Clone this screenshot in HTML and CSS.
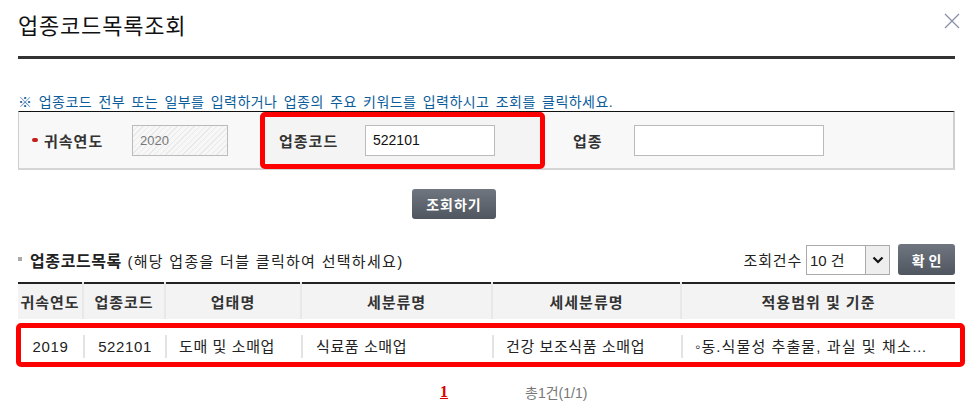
FILE: index.html
```html
<!DOCTYPE html>
<html lang="ko">

<head>
    <meta charset="UTF-8">
    <title>업종코드목록조회</title>
    <link rel="stylesheet" href="styles.css">
</head>

<body>
    <div class="popup">
        <div class="head">
            <h1 class="title">업종코드목록조회</h1>
            <a class="close" href="#" title="닫기">
                <svg width="16" height="16" viewBox="0 0 16 16"><path d="M1 1 L15 15 M15 1 L1 15" stroke="#8890a8" stroke-width="1.3" fill="none"/></svg>
            </a>
        </div>

        <p class="guide">※ 업종코드 전부 또는 일부를 입력하거나 업종의 주요 키워드를 입력하시고 조회를 클릭하세요.</p>

        <div class="search">
            <span class="req"></span>
            <label class="lbl lbl-year">귀속연도</label>
            <input type="text" class="inp inp-year" value="2020" disabled>
            <div class="code-cell">
                <label class="lbl lbl-code">업종코드</label>
                <input type="text" class="inp inp-code" value="522101">
                <span class="mark mark-code"></span>
            </div>
            <label class="lbl lbl-name">업종</label>
            <input type="text" class="inp inp-name">
        </div>

        <div class="btn-row">
            <button class="btn btn-search">조회하기</button>
        </div>

        <div class="list-head">
            <h2 class="list-title"><b>업종코드목록</b> (해당 업종을 더블 클릭하여 선택하세요)</h2>
            <div class="count">
                <span>조회건수</span>
                <div class="sel">
                    <span class="sel-val">10 건</span>
                    <span class="sel-arr">
                        <svg width="12" height="8" viewBox="0 0 12 8"><path d="M1.5 1.5 L6 6 L10.5 1.5" stroke="#111" stroke-width="2.2" fill="none"/></svg>
                    </span>
                </div>
                <button class="btn btn-ok">확 인</button>
            </div>
        </div>

        <div class="table-wrap">
            <table class="list">
                <colgroup>
                    <col style="width:65px">
                    <col style="width:82px">
                    <col style="width:136px">
                    <col style="width:191px">
                    <col style="width:189px">
                    <col>
                </colgroup>
                <thead>
                    <tr>
                        <th>귀속연도</th>
                        <th>업종코드</th>
                        <th>업태명</th>
                        <th>세분류명</th>
                        <th>세세분류명</th>
                        <th>적용범위 및 기준</th>
                    </tr>
                </thead>
                <tbody>
                    <tr>
                        <td class="c"><div>2019</div></td>
                        <td class="c"><div>522101</div></td>
                        <td><div>도매 및 소매업</div></td>
                        <td><div>식료품 소매업</div></td>
                        <td><div>건강 보조식품 소매업</div></td>
                        <td><div>◦동.식물성 추출물, 과실 및 채소…</div></td>
                    </tr>
                </tbody>
            </table>
            <span class="mark mark-row"></span>
        </div>

        <div class="paging">
            <a href="#" class="page">1</a>
            <span class="total">총1건(1/1)</span>
        </div>
    </div>
</body>

</html>
```

FILE: styles.css
```css
body {
    margin: 0;
    background: #fff;
    font-family: "Liberation Sans", "Noto Sans CJK KR", sans-serif;
    color: #222;
}

.popup {
    width: 937px;
    padding: 0 25px 0 18px;
}

.head {
    position: relative;
    height: 56px;
    border-bottom: 3px solid #333;
}
.title {
    margin: 0;
    padding-top: 13px;
    font-size: 22px;
    font-weight: normal;
    line-height: 28px;
    letter-spacing: 0.8px;
    color: #111;
}
.close {
    position: absolute;
    right: -5px;
    top: 13px;
}

.guide {
    margin: 35px 0 0;
    font-size: 14px;
    line-height: 16px;
    color: #0b5c9a;
    letter-spacing: 0.45px;
    word-spacing: 2px;
}

.search {
    display: flex;
    align-items: center;
    height: 56px;
    margin-top: 1px;
    border-top: 1px solid #111;
    border-left: 1px solid #cfcfcf;
    border-right: 2px solid #cfcfcf;
    border-bottom: 2px solid #d5d5d5;
    background: #f8f8f8;
}
.req {
    width: 6px;
    height: 4px;
    margin-left: 13px;
    background: #c41f1f;
    border-radius: 2px;
}
.lbl {
    font-size: 15px;
    font-weight: bold;
    color: #333;
    letter-spacing: 1px;
}
.lbl-year { margin-left: 6px; width: 88px; }
.inp {
    height: 31px;
    box-sizing: border-box;
    border: 1px solid #bbb;
    background: #fff;
    font-family: "Liberation Sans", sans-serif;
    font-size: 13px;
    padding: 0 7px;
    color: #111;
}
.inp-year {
    width: 96px;
    color: #777;
    background: repeating-linear-gradient(135deg, #f7f7f7 0 3px, #e9e9e9 3px 4px);
}
.code-cell {
    position: relative;
    display: flex;
    align-items: center;
    height: 100%;
    margin-left: 33px;
    padding: 0 50px 0 18px;
    background: #f4f4f4;
}
.lbl-code { width: 86px; }
.inp-code { width: 130px; font-size: 14px; }
.lbl-name { margin-left: 28px; width: 61px; }
.inp-name { width: 190px; }

.mark {
    position: absolute;
    border: 5px solid #f00;
    border-radius: 5px;
}
.mark-code {
    left: -1px;
    top: 0;
    right: 0;
    bottom: -1px;
}

.btn {
    border: none;
    border-radius: 3px;
    background: linear-gradient(#70767f, #50565f);
    color: #fff;
    font-family: "Noto Sans CJK KR", sans-serif;
    font-weight: bold;
    cursor: pointer;
}
.btn-row {
    display: flex;
    margin-top: 19px;
    padding-left: 394px;
}
.btn-search {
    width: 84px;
    height: 30px;
    font-size: 14px;
    letter-spacing: 1px;
}

.list-head {
    display: flex;
    justify-content: space-between;
    align-items: center;
    margin-top: 25px;
    height: 31px;
}
.list-title {
    margin: 0;
    font-size: 15px;
    font-weight: normal;
    color: #222;
    padding-left: 12px;
    position: relative;
    letter-spacing: 1.3px;
}
.list-title::before {
    content: "";
    position: absolute;
    left: 0;
    top: 9px;
    width: 4px;
    height: 4px;
    background: #aaa;
}
.list-title b { font-size: 16px; letter-spacing: 0.6px; }
.count {
    display: flex;
    align-items: center;
    font-size: 15px;
    letter-spacing: 0.8px;
    color: #222;
}
.sel {
    display: flex;
    align-items: center;
    width: 84px;
    height: 30px;
    box-sizing: border-box;
    margin-left: 4px;
    border: 1px solid #aaa;
    background: #fff;
    letter-spacing: 0;
}
.sel-val {
    flex: 1;
    padding-left: 3px;
    font-size: 15px;
}
.sel-arr {
    display: flex;
    align-items: center;
    justify-content: center;
    width: 23px;
    height: 28px;
    border-left: 1px solid #aaa;
    background: #eee;
}
.btn-ok {
    width: 57px;
    height: 31px;
    margin-left: 8px;
    font-size: 14px;
}

.table-wrap {
    position: relative;
    margin-top: 7px;
}
.list {
    width: 100%;
    border-collapse: collapse;
    table-layout: fixed;
    border-top: 2px solid #222;
}
.list th {
    height: 35px;
    padding: 0;
    background: #f3f3f3;
    border-left: 2px solid #e8e8e8;
    font-size: 15px;
    color: #333;
    letter-spacing: 1px;
    white-space: nowrap;
}
.list th:first-child { border-left: none; }
.list td {
    height: 50px;
    padding: 0;
    font-size: 15px;
    color: #222;
    white-space: nowrap;
}
.list td div {
    height: 23px;
    line-height: 23px;
    margin-top: 5px;
    padding-left: 12px;
    border-left: 2px solid #e3e3e3;
    letter-spacing: 0.6px;
    overflow: hidden;
}
.list td:first-child div { border-left: none; }
.list td.c div { padding-left: 0; text-align: center; }
.list td:nth-child(4) div { padding-left: 13px; }
.list td:last-child div { padding-left: 12px; letter-spacing: 1.1px; }
.mark-row {
    left: -2px;
    right: -10px;
    top: 41px;
    height: 34px;
}

.paging {
    display: flex;
    margin-top: 13px;
    padding-left: 422px;
    align-items: center;
}
.page {
    font-family: "Liberation Serif", serif;
    font-weight: bold;
    font-size: 16px;
    color: #d00;
}
.total {
    margin-left: 77px;
    font-size: 14px;
    color: #777;
}
```
